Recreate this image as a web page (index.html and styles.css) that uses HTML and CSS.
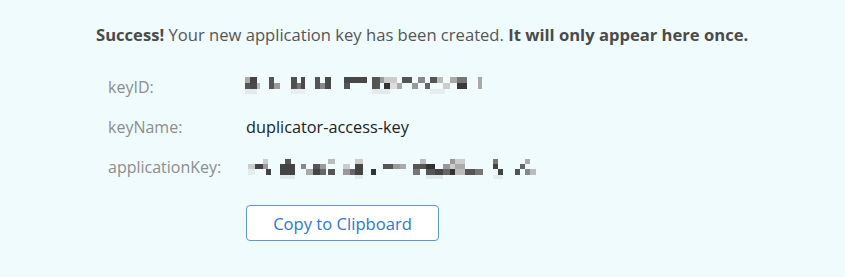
FILE: index.html
```html
<!DOCTYPE html>
<html lang="en">
<head>
<meta charset="utf-8">
<title>Application key created</title>
<link rel="stylesheet" href="styles.css">
</head>
<body>
<main class="panel">
  <p class="notice"><strong>Success!</strong> Your new application key has been created. <strong>It will only appear here once.</strong></p>
  <div class="details">
    <div class="label">keyID:</div>
    <div class="value">
      <svg class="redact redact-id" width="240" height="22" viewBox="0 0 240 22" aria-label="redacted">
        <rect x="0" y="1" width="5" height="6" fill="#aaa"/>
        <rect x="0" y="7" width="5" height="6" fill="#555"/>
        <rect x="5" y="1" width="7" height="6" fill="#454545"/>
        <rect x="5" y="7" width="7" height="6" fill="#4a4a4a"/>
        <rect x="12" y="7" width="3" height="6" fill="#bbb"/>
        <rect x="24" y="1" width="5" height="12" fill="#555"/>
        <rect x="29" y="7" width="6" height="6" fill="#9a9a9a"/>
        <rect x="46" y="1" width="6" height="12" fill="#505050"/>
        <rect x="52" y="7" width="4" height="6" fill="#777"/>
        <rect x="56" y="1" width="4" height="12" fill="#4a4a4a"/>
        <rect x="70" y="1" width="5" height="12" fill="#555"/>
        <rect x="75" y="7" width="5" height="6" fill="#888"/>
        <rect x="80" y="1" width="6" height="12" fill="#4a4a4a"/>
        <rect x="99" y="1" width="23" height="6" fill="#484848"/>
        <rect x="99" y="7" width="6" height="6" fill="#555"/>
        <rect x="127" y="1" width="8" height="12" fill="#555"/>
        <rect x="135" y="1" width="4" height="6" fill="#999"/>
        <rect x="139" y="1" width="6" height="6" fill="#ccc"/>
        <rect x="139" y="7" width="6" height="6" fill="#333"/>
        <rect x="145" y="1" width="7" height="6" fill="#ccc"/>
        <rect x="145" y="7" width="7" height="6" fill="#ddd"/>
        <rect x="152" y="7" width="5" height="6" fill="#aaa"/>
        <rect x="157" y="1" width="10" height="6" fill="#555"/>
        <rect x="167" y="7" width="6" height="6" fill="#999"/>
        <rect x="173" y="1" width="7" height="6" fill="#888"/>
        <rect x="180" y="7" width="5" height="6" fill="#666"/>
        <rect x="185" y="1" width="7" height="6" fill="#555"/>
        <rect x="192" y="1" width="6" height="6" fill="#bbb"/>
        <rect x="198" y="7" width="7" height="6" fill="#ccc"/>
        <rect x="205" y="1" width="7" height="6" fill="#aaa"/>
        <rect x="212" y="1" width="10" height="6" fill="#777"/>
        <rect x="212" y="7" width="10" height="6" fill="#3a3a3a"/>
        <rect x="233" y="1" width="4" height="12" fill="#aaa"/>
        <rect x="0" y="13" width="12" height="5" fill="#e3eaec"/>
        <rect x="46" y="13" width="14" height="5" fill="#e8eff0"/>
        <rect x="127" y="13" width="18" height="5" fill="#e3eaec"/>
        <rect x="185" y="13" width="15" height="5" fill="#e6edef"/>
      </svg>
    </div>
    <div class="label">keyName:</div>
    <div class="value name">duplicator-access-key</div>
    <div class="label">applicationKey:</div>
    <div class="value">
      <svg class="redact redact-app" width="292" height="24" viewBox="0 0 292 24" aria-label="redacted">
        <rect x="2" y="9" width="7" height="5" fill="#ccc"/>
        <rect x="2" y="14" width="7" height="6" fill="#e5ecee"/>
        <rect x="9" y="9" width="8" height="5" fill="#444"/>
        <rect x="17" y="4" width="5" height="5" fill="#ccc"/>
        <rect x="17" y="9" width="5" height="5" fill="#999"/>
        <rect x="20" y="14" width="5" height="6" fill="#444"/>
        <rect x="39" y="4" width="6" height="5" fill="#555"/>
        <rect x="34" y="9" width="15" height="11" fill="#444"/>
        <rect x="55" y="9" width="5" height="5" fill="#888"/>
        <rect x="60" y="14" width="7" height="6" fill="#aaa"/>
        <rect x="67" y="9" width="7" height="5" fill="#555"/>
        <rect x="67" y="14" width="7" height="6" fill="#444"/>
        <rect x="74" y="9" width="6" height="5" fill="#999"/>
        <rect x="74" y="14" width="6" height="6" fill="#666"/>
        <rect x="82" y="4" width="7" height="5" fill="#bbb"/>
        <rect x="82" y="14" width="7" height="6" fill="#555"/>
        <rect x="97" y="9" width="7" height="5" fill="#ccc"/>
        <rect x="97" y="14" width="7" height="6" fill="#999"/>
        <rect x="104" y="14" width="5" height="6" fill="#666"/>
        <rect x="109" y="4" width="8" height="5" fill="#ccc"/>
        <rect x="109" y="9" width="8" height="11" fill="#444"/>
        <rect x="125" y="14" width="5" height="6" fill="#333"/>
        <rect x="137" y="9" width="10" height="5" fill="#555"/>
        <rect x="147" y="9" width="7" height="5" fill="#999"/>
        <rect x="154" y="9" width="6" height="5" fill="#aaa"/>
        <rect x="167" y="9" width="7" height="5" fill="#555"/>
        <rect x="167" y="14" width="7" height="6" fill="#777"/>
        <rect x="174" y="4" width="6" height="5" fill="#bbb"/>
        <rect x="174" y="9" width="6" height="5" fill="#555"/>
        <rect x="180" y="9" width="9" height="5" fill="#333"/>
        <rect x="180" y="14" width="9" height="6" fill="#555"/>
        <rect x="189" y="14" width="8" height="6" fill="#444"/>
        <rect x="197" y="9" width="7" height="5" fill="#999"/>
        <rect x="197" y="14" width="7" height="6" fill="#666"/>
        <rect x="204" y="4" width="5" height="5" fill="#999"/>
        <rect x="204" y="9" width="5" height="5" fill="#ccc"/>
        <rect x="204" y="14" width="5" height="6" fill="#333"/>
        <rect x="209" y="4" width="10" height="5" fill="#ccc"/>
        <rect x="209" y="9" width="10" height="5" fill="#aaa"/>
        <rect x="209" y="14" width="10" height="6" fill="#bbb"/>
        <rect x="219" y="14" width="10" height="6" fill="#555"/>
        <rect x="229" y="14" width="8" height="6" fill="#777"/>
        <rect x="247" y="4" width="5" height="5" fill="#777"/>
        <rect x="247" y="9" width="5" height="5" fill="#444"/>
        <rect x="252" y="14" width="5" height="6" fill="#444"/>
        <rect x="269" y="14" width="5" height="6" fill="#555"/>
        <rect x="274" y="9" width="5" height="5" fill="#666"/>
        <rect x="279" y="4" width="5" height="5" fill="#aaa"/>
        <rect x="279" y="14" width="5" height="6" fill="#888"/>
        <rect x="284" y="14" width="6" height="6" fill="#bbb"/>
        <rect x="34" y="20" width="15" height="4" fill="#e2e9eb"/>
        <rect x="109" y="20" width="8" height="4" fill="#e4ebed"/>
        <rect x="180" y="20" width="17" height="4" fill="#e2e9eb"/>
        <rect x="247" y="20" width="10" height="4" fill="#e6edef"/>
      </svg>
    </div>
  </div>
  <div class="actions">
    <button class="copy-btn" type="button">Copy to Clipboard</button>
  </div>
</main>
</body>
</html>
```

FILE: styles.css
```css
html, body {
  margin: 0;
  padding: 0;
  background: #effbfd;
}
body {
  font-family: "Open Sans", "Liberation Sans", sans-serif;
  color: #555;
}
.panel {
  padding: 23px 0 0 96px;
}
.notice {
  margin: 0;
  font-size: 16.6px;
  line-height: 24px;
  color: #555;
}
.notice strong {
  font-weight: 700;
  color: #4a4a4a;
}
.details {
  display: grid;
  grid-template-columns: 138px auto;
  grid-auto-rows: 40px;
  align-items: center;
  margin: 20px 0 0 12px;
}
.label {
  font-size: 16px;
  color: #8d8d8d;
}
.value {
  font-size: 16.3px;
  color: #222;
  display: flex;
  align-items: center;
}
.redact {
  display: block;
}
.redact-id {
  margin-left: -1px;
}
.actions {
  margin: 18px 0 0 150px;
}
.copy-btn {
  font-family: "Open Sans", "Liberation Sans", sans-serif;
  font-size: 16.6px;
  color: #2a78d0;
  background: #fff;
  border: 1px solid #5b97dc;
  border-radius: 4px;
  width: 193px;
  height: 36px;
  padding: 0;
  cursor: pointer;
}
```
